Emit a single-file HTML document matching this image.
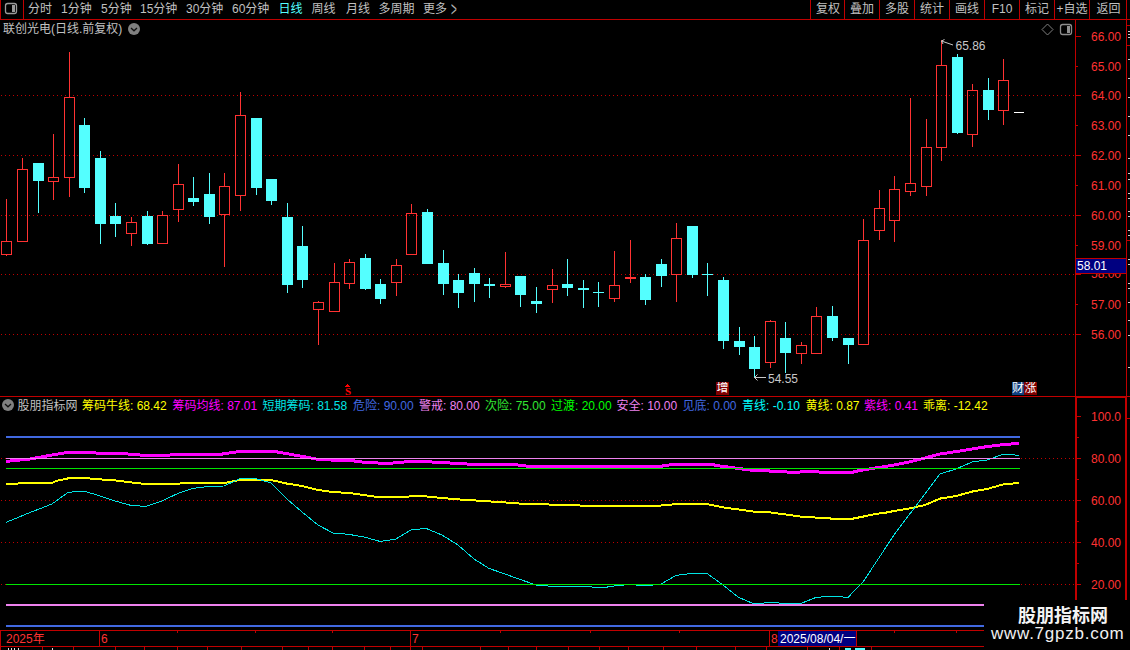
<!DOCTYPE html>
<html><head><meta charset="utf-8"><title>chart</title>
<style>
html,body{margin:0;padding:0;background:#000;}
body{width:1130px;height:650px;overflow:hidden;position:relative;font-family:"Liberation Sans","Noto Sans CJK SC","WenQuanYi Zen Hei",sans-serif;font-size:12px;line-height:14px;color:#c0c0c0;}
svg{position:absolute;left:0;top:0;}
.t{position:absolute;white-space:nowrap;}
.tb{top:2px;}
.ax{left:1091px;color:#ff3232;}
.bt{position:absolute;top:2px;width:34px;text-align:center;}
.lg{position:absolute;top:398px;white-space:nowrap;}
</style></head><body>
<svg width="1130" height="650" viewBox="0 0 1130 650" shape-rendering="crispEdges">
<g stroke="#c00000" stroke-width="1" stroke-dasharray="1 3">
<line x1="1" y1="95.5" x2="1075" y2="95.5"/>
<line x1="1" y1="155.5" x2="1075" y2="155.5"/>
<line x1="1" y1="215.5" x2="1075" y2="215.5"/>
<line x1="1" y1="274.5" x2="1075" y2="274.5"/>
<line x1="1" y1="334.5" x2="1075" y2="334.5"/>
<line x1="1" y1="458.5" x2="1075" y2="458.5"/>
<line x1="1" y1="500.5" x2="1075" y2="500.5"/>
<line x1="1" y1="542.5" x2="1075" y2="542.5"/>
<line x1="1" y1="584.5" x2="1075" y2="584.5"/>
</g>
<rect x="6" y="199" width="1" height="42" fill="#ff3232"/>
<rect x="6" y="255" width="1" height="1" fill="#ff3232"/>
<rect x="1" y="241" width="11" height="1" fill="#ff3232"/>
<rect x="1" y="254" width="11" height="1" fill="#ff3232"/>
<rect x="1" y="241" width="1" height="14" fill="#ff3232"/>
<rect x="11" y="241" width="1" height="14" fill="#ff3232"/>
<rect x="22" y="158" width="1" height="11" fill="#ff3232"/>
<rect x="17" y="169" width="11" height="1" fill="#ff3232"/>
<rect x="17" y="241" width="11" height="1" fill="#ff3232"/>
<rect x="17" y="169" width="1" height="73" fill="#ff3232"/>
<rect x="27" y="169" width="1" height="73" fill="#ff3232"/>
<rect x="38" y="181" width="1" height="32" fill="#54ffff"/>
<rect x="33" y="163" width="11" height="18" fill="#54ffff"/>
<rect x="53" y="134" width="1" height="43" fill="#ff3232"/>
<rect x="53" y="182" width="1" height="18" fill="#ff3232"/>
<rect x="48" y="177" width="11" height="1" fill="#ff3232"/>
<rect x="48" y="181" width="11" height="1" fill="#ff3232"/>
<rect x="48" y="177" width="1" height="5" fill="#ff3232"/>
<rect x="58" y="177" width="1" height="5" fill="#ff3232"/>
<rect x="69" y="52" width="1" height="45" fill="#ff3232"/>
<rect x="69" y="178" width="1" height="19" fill="#ff3232"/>
<rect x="64" y="97" width="11" height="1" fill="#ff3232"/>
<rect x="64" y="177" width="11" height="1" fill="#ff3232"/>
<rect x="64" y="97" width="1" height="81" fill="#ff3232"/>
<rect x="74" y="97" width="1" height="81" fill="#ff3232"/>
<rect x="84" y="118" width="1" height="7" fill="#54ffff"/>
<rect x="84" y="188" width="1" height="5" fill="#54ffff"/>
<rect x="79" y="125" width="11" height="63" fill="#54ffff"/>
<rect x="100" y="151" width="1" height="7" fill="#54ffff"/>
<rect x="100" y="224" width="1" height="20" fill="#54ffff"/>
<rect x="95" y="158" width="11" height="66" fill="#54ffff"/>
<rect x="115" y="203" width="1" height="13" fill="#54ffff"/>
<rect x="115" y="224" width="1" height="13" fill="#54ffff"/>
<rect x="110" y="216" width="11" height="8" fill="#54ffff"/>
<rect x="131" y="217" width="1" height="5" fill="#ff3232"/>
<rect x="131" y="234" width="1" height="12" fill="#ff3232"/>
<rect x="126" y="222" width="11" height="1" fill="#ff3232"/>
<rect x="126" y="233" width="11" height="1" fill="#ff3232"/>
<rect x="126" y="222" width="1" height="12" fill="#ff3232"/>
<rect x="136" y="222" width="1" height="12" fill="#ff3232"/>
<rect x="147" y="211" width="1" height="5" fill="#54ffff"/>
<rect x="147" y="244" width="1" height="1" fill="#54ffff"/>
<rect x="142" y="216" width="11" height="28" fill="#54ffff"/>
<rect x="162" y="211" width="1" height="4" fill="#ff3232"/>
<rect x="157" y="215" width="11" height="1" fill="#ff3232"/>
<rect x="157" y="243" width="11" height="1" fill="#ff3232"/>
<rect x="157" y="215" width="1" height="29" fill="#ff3232"/>
<rect x="167" y="215" width="1" height="29" fill="#ff3232"/>
<rect x="178" y="164" width="1" height="20" fill="#ff3232"/>
<rect x="178" y="210" width="1" height="12" fill="#ff3232"/>
<rect x="173" y="184" width="11" height="1" fill="#ff3232"/>
<rect x="173" y="209" width="11" height="1" fill="#ff3232"/>
<rect x="173" y="184" width="1" height="26" fill="#ff3232"/>
<rect x="183" y="184" width="1" height="26" fill="#ff3232"/>
<rect x="193" y="177" width="1" height="21" fill="#54ffff"/>
<rect x="193" y="202" width="1" height="4" fill="#54ffff"/>
<rect x="188" y="198" width="11" height="4" fill="#54ffff"/>
<rect x="209" y="173" width="1" height="21" fill="#54ffff"/>
<rect x="209" y="217" width="1" height="7" fill="#54ffff"/>
<rect x="204" y="194" width="11" height="23" fill="#54ffff"/>
<rect x="224" y="173" width="1" height="13" fill="#ff3232"/>
<rect x="224" y="215" width="1" height="52" fill="#ff3232"/>
<rect x="219" y="186" width="11" height="1" fill="#ff3232"/>
<rect x="219" y="214" width="11" height="1" fill="#ff3232"/>
<rect x="219" y="186" width="1" height="29" fill="#ff3232"/>
<rect x="229" y="186" width="1" height="29" fill="#ff3232"/>
<rect x="240" y="92" width="1" height="23" fill="#ff3232"/>
<rect x="240" y="196" width="1" height="15" fill="#ff3232"/>
<rect x="235" y="115" width="11" height="1" fill="#ff3232"/>
<rect x="235" y="195" width="11" height="1" fill="#ff3232"/>
<rect x="235" y="115" width="1" height="81" fill="#ff3232"/>
<rect x="245" y="115" width="1" height="81" fill="#ff3232"/>
<rect x="256" y="188" width="1" height="7" fill="#54ffff"/>
<rect x="251" y="118" width="11" height="70" fill="#54ffff"/>
<rect x="271" y="201" width="1" height="4" fill="#54ffff"/>
<rect x="266" y="179" width="11" height="22" fill="#54ffff"/>
<rect x="287" y="203" width="1" height="14" fill="#54ffff"/>
<rect x="287" y="285" width="1" height="8" fill="#54ffff"/>
<rect x="282" y="217" width="11" height="68" fill="#54ffff"/>
<rect x="302" y="226" width="1" height="20" fill="#54ffff"/>
<rect x="302" y="280" width="1" height="8" fill="#54ffff"/>
<rect x="297" y="246" width="11" height="34" fill="#54ffff"/>
<rect x="318" y="301" width="1" height="1" fill="#ff3232"/>
<rect x="318" y="310" width="1" height="35" fill="#ff3232"/>
<rect x="313" y="302" width="11" height="1" fill="#ff3232"/>
<rect x="313" y="309" width="11" height="1" fill="#ff3232"/>
<rect x="313" y="302" width="1" height="8" fill="#ff3232"/>
<rect x="323" y="302" width="1" height="8" fill="#ff3232"/>
<rect x="334" y="263" width="1" height="19" fill="#ff3232"/>
<rect x="329" y="282" width="11" height="1" fill="#ff3232"/>
<rect x="329" y="311" width="11" height="1" fill="#ff3232"/>
<rect x="329" y="282" width="1" height="30" fill="#ff3232"/>
<rect x="339" y="282" width="1" height="30" fill="#ff3232"/>
<rect x="349" y="259" width="1" height="3" fill="#ff3232"/>
<rect x="349" y="284" width="1" height="5" fill="#ff3232"/>
<rect x="344" y="262" width="11" height="1" fill="#ff3232"/>
<rect x="344" y="283" width="11" height="1" fill="#ff3232"/>
<rect x="344" y="262" width="1" height="22" fill="#ff3232"/>
<rect x="354" y="262" width="1" height="22" fill="#ff3232"/>
<rect x="365" y="254" width="1" height="4" fill="#54ffff"/>
<rect x="365" y="289" width="1" height="1" fill="#54ffff"/>
<rect x="360" y="258" width="11" height="31" fill="#54ffff"/>
<rect x="380" y="279" width="1" height="5" fill="#54ffff"/>
<rect x="380" y="299" width="1" height="5" fill="#54ffff"/>
<rect x="375" y="284" width="11" height="15" fill="#54ffff"/>
<rect x="396" y="259" width="1" height="6" fill="#ff3232"/>
<rect x="396" y="283" width="1" height="13" fill="#ff3232"/>
<rect x="391" y="265" width="11" height="1" fill="#ff3232"/>
<rect x="391" y="282" width="11" height="1" fill="#ff3232"/>
<rect x="391" y="265" width="1" height="18" fill="#ff3232"/>
<rect x="401" y="265" width="1" height="18" fill="#ff3232"/>
<rect x="411" y="204" width="1" height="9" fill="#ff3232"/>
<rect x="406" y="213" width="11" height="1" fill="#ff3232"/>
<rect x="406" y="254" width="11" height="1" fill="#ff3232"/>
<rect x="406" y="213" width="1" height="42" fill="#ff3232"/>
<rect x="416" y="213" width="1" height="42" fill="#ff3232"/>
<rect x="427" y="209" width="1" height="3" fill="#54ffff"/>
<rect x="422" y="212" width="11" height="52" fill="#54ffff"/>
<rect x="443" y="250" width="1" height="13" fill="#54ffff"/>
<rect x="443" y="284" width="1" height="11" fill="#54ffff"/>
<rect x="438" y="263" width="11" height="21" fill="#54ffff"/>
<rect x="458" y="274" width="1" height="6" fill="#54ffff"/>
<rect x="458" y="293" width="1" height="15" fill="#54ffff"/>
<rect x="453" y="280" width="11" height="13" fill="#54ffff"/>
<rect x="474" y="268" width="1" height="5" fill="#54ffff"/>
<rect x="474" y="284" width="1" height="18" fill="#54ffff"/>
<rect x="469" y="273" width="11" height="11" fill="#54ffff"/>
<rect x="489" y="278" width="1" height="6" fill="#54ffff"/>
<rect x="489" y="286" width="1" height="12" fill="#54ffff"/>
<rect x="484" y="284" width="11" height="2" fill="#54ffff"/>
<rect x="505" y="252" width="1" height="32" fill="#ff3232"/>
<rect x="505" y="287" width="1" height="1" fill="#ff3232"/>
<rect x="500" y="284" width="11" height="1" fill="#ff3232"/>
<rect x="500" y="286" width="11" height="1" fill="#ff3232"/>
<rect x="500" y="284" width="1" height="3" fill="#ff3232"/>
<rect x="510" y="284" width="1" height="3" fill="#ff3232"/>
<rect x="520" y="295" width="1" height="12" fill="#54ffff"/>
<rect x="515" y="276" width="11" height="19" fill="#54ffff"/>
<rect x="536" y="287" width="1" height="14" fill="#54ffff"/>
<rect x="536" y="304" width="1" height="9" fill="#54ffff"/>
<rect x="531" y="301" width="11" height="3" fill="#54ffff"/>
<rect x="552" y="269" width="1" height="16" fill="#ff3232"/>
<rect x="552" y="290" width="1" height="13" fill="#ff3232"/>
<rect x="547" y="285" width="11" height="1" fill="#ff3232"/>
<rect x="547" y="289" width="11" height="1" fill="#ff3232"/>
<rect x="547" y="285" width="1" height="5" fill="#ff3232"/>
<rect x="557" y="285" width="1" height="5" fill="#ff3232"/>
<rect x="567" y="259" width="1" height="25" fill="#54ffff"/>
<rect x="567" y="288" width="1" height="8" fill="#54ffff"/>
<rect x="562" y="284" width="11" height="4" fill="#54ffff"/>
<rect x="583" y="280" width="1" height="8" fill="#54ffff"/>
<rect x="583" y="290" width="1" height="18" fill="#54ffff"/>
<rect x="578" y="288" width="11" height="2" fill="#54ffff"/>
<rect x="598" y="282" width="1" height="10" fill="#54ffff"/>
<rect x="598" y="293" width="1" height="14" fill="#54ffff"/>
<rect x="593" y="292" width="11" height="1" fill="#54ffff"/>
<rect x="614" y="251" width="1" height="34" fill="#ff3232"/>
<rect x="614" y="299" width="1" height="3" fill="#ff3232"/>
<rect x="609" y="285" width="11" height="1" fill="#ff3232"/>
<rect x="609" y="298" width="11" height="1" fill="#ff3232"/>
<rect x="609" y="285" width="1" height="14" fill="#ff3232"/>
<rect x="619" y="285" width="1" height="14" fill="#ff3232"/>
<rect x="630" y="240" width="1" height="37" fill="#ff3232"/>
<rect x="630" y="279" width="1" height="4" fill="#ff3232"/>
<rect x="625" y="277" width="11" height="1" fill="#ff3232"/>
<rect x="625" y="278" width="11" height="1" fill="#ff3232"/>
<rect x="625" y="277" width="1" height="2" fill="#ff3232"/>
<rect x="635" y="277" width="1" height="2" fill="#ff3232"/>
<rect x="645" y="274" width="1" height="3" fill="#54ffff"/>
<rect x="645" y="300" width="1" height="5" fill="#54ffff"/>
<rect x="640" y="277" width="11" height="23" fill="#54ffff"/>
<rect x="661" y="259" width="1" height="5" fill="#54ffff"/>
<rect x="661" y="276" width="1" height="11" fill="#54ffff"/>
<rect x="656" y="264" width="11" height="12" fill="#54ffff"/>
<rect x="676" y="223" width="1" height="15" fill="#ff3232"/>
<rect x="676" y="275" width="1" height="27" fill="#ff3232"/>
<rect x="671" y="238" width="11" height="1" fill="#ff3232"/>
<rect x="671" y="274" width="11" height="1" fill="#ff3232"/>
<rect x="671" y="238" width="1" height="37" fill="#ff3232"/>
<rect x="681" y="238" width="1" height="37" fill="#ff3232"/>
<rect x="692" y="275" width="1" height="3" fill="#54ffff"/>
<rect x="687" y="226" width="11" height="49" fill="#54ffff"/>
<rect x="707" y="263" width="1" height="11" fill="#54ffff"/>
<rect x="707" y="275" width="1" height="21" fill="#54ffff"/>
<rect x="702" y="274" width="11" height="1" fill="#54ffff"/>
<rect x="723" y="277" width="1" height="3" fill="#54ffff"/>
<rect x="723" y="341" width="1" height="8" fill="#54ffff"/>
<rect x="718" y="280" width="11" height="61" fill="#54ffff"/>
<rect x="739" y="327" width="1" height="14" fill="#54ffff"/>
<rect x="739" y="347" width="1" height="8" fill="#54ffff"/>
<rect x="734" y="341" width="11" height="6" fill="#54ffff"/>
<rect x="754" y="336" width="1" height="11" fill="#54ffff"/>
<rect x="754" y="369" width="1" height="9" fill="#54ffff"/>
<rect x="749" y="347" width="11" height="22" fill="#54ffff"/>
<rect x="770" y="320" width="1" height="1" fill="#ff3232"/>
<rect x="770" y="363" width="1" height="5" fill="#ff3232"/>
<rect x="765" y="321" width="11" height="1" fill="#ff3232"/>
<rect x="765" y="362" width="11" height="1" fill="#ff3232"/>
<rect x="765" y="321" width="1" height="42" fill="#ff3232"/>
<rect x="775" y="321" width="1" height="42" fill="#ff3232"/>
<rect x="785" y="322" width="1" height="16" fill="#54ffff"/>
<rect x="785" y="353" width="1" height="20" fill="#54ffff"/>
<rect x="780" y="338" width="11" height="15" fill="#54ffff"/>
<rect x="801" y="342" width="1" height="3" fill="#ff3232"/>
<rect x="801" y="354" width="1" height="10" fill="#ff3232"/>
<rect x="796" y="345" width="11" height="1" fill="#ff3232"/>
<rect x="796" y="353" width="11" height="1" fill="#ff3232"/>
<rect x="796" y="345" width="1" height="9" fill="#ff3232"/>
<rect x="806" y="345" width="1" height="9" fill="#ff3232"/>
<rect x="816" y="307" width="1" height="9" fill="#ff3232"/>
<rect x="811" y="316" width="11" height="1" fill="#ff3232"/>
<rect x="811" y="353" width="11" height="1" fill="#ff3232"/>
<rect x="811" y="316" width="1" height="38" fill="#ff3232"/>
<rect x="821" y="316" width="1" height="38" fill="#ff3232"/>
<rect x="832" y="306" width="1" height="10" fill="#54ffff"/>
<rect x="832" y="338" width="1" height="3" fill="#54ffff"/>
<rect x="827" y="316" width="11" height="22" fill="#54ffff"/>
<rect x="848" y="345" width="1" height="19" fill="#54ffff"/>
<rect x="843" y="338" width="11" height="7" fill="#54ffff"/>
<rect x="863" y="219" width="1" height="21" fill="#ff3232"/>
<rect x="858" y="240" width="11" height="1" fill="#ff3232"/>
<rect x="858" y="344" width="11" height="1" fill="#ff3232"/>
<rect x="858" y="240" width="1" height="105" fill="#ff3232"/>
<rect x="868" y="240" width="1" height="105" fill="#ff3232"/>
<rect x="879" y="190" width="1" height="18" fill="#ff3232"/>
<rect x="879" y="231" width="1" height="9" fill="#ff3232"/>
<rect x="874" y="208" width="11" height="1" fill="#ff3232"/>
<rect x="874" y="230" width="11" height="1" fill="#ff3232"/>
<rect x="874" y="208" width="1" height="23" fill="#ff3232"/>
<rect x="884" y="208" width="1" height="23" fill="#ff3232"/>
<rect x="894" y="176" width="1" height="13" fill="#ff3232"/>
<rect x="894" y="221" width="1" height="21" fill="#ff3232"/>
<rect x="889" y="189" width="11" height="1" fill="#ff3232"/>
<rect x="889" y="220" width="11" height="1" fill="#ff3232"/>
<rect x="889" y="189" width="1" height="32" fill="#ff3232"/>
<rect x="899" y="189" width="1" height="32" fill="#ff3232"/>
<rect x="910" y="98" width="1" height="85" fill="#ff3232"/>
<rect x="910" y="192" width="1" height="4" fill="#ff3232"/>
<rect x="905" y="183" width="11" height="1" fill="#ff3232"/>
<rect x="905" y="191" width="11" height="1" fill="#ff3232"/>
<rect x="905" y="183" width="1" height="9" fill="#ff3232"/>
<rect x="915" y="183" width="1" height="9" fill="#ff3232"/>
<rect x="926" y="119" width="1" height="28" fill="#ff3232"/>
<rect x="926" y="187" width="1" height="9" fill="#ff3232"/>
<rect x="921" y="147" width="11" height="1" fill="#ff3232"/>
<rect x="921" y="186" width="11" height="1" fill="#ff3232"/>
<rect x="921" y="147" width="1" height="40" fill="#ff3232"/>
<rect x="931" y="147" width="1" height="40" fill="#ff3232"/>
<rect x="941" y="40" width="1" height="25" fill="#ff3232"/>
<rect x="941" y="148" width="1" height="13" fill="#ff3232"/>
<rect x="936" y="65" width="11" height="1" fill="#ff3232"/>
<rect x="936" y="147" width="11" height="1" fill="#ff3232"/>
<rect x="936" y="65" width="1" height="83" fill="#ff3232"/>
<rect x="946" y="65" width="1" height="83" fill="#ff3232"/>
<rect x="957" y="54" width="1" height="3" fill="#54ffff"/>
<rect x="957" y="133" width="1" height="1" fill="#54ffff"/>
<rect x="952" y="57" width="11" height="76" fill="#54ffff"/>
<rect x="972" y="84" width="1" height="6" fill="#ff3232"/>
<rect x="972" y="135" width="1" height="12" fill="#ff3232"/>
<rect x="967" y="90" width="11" height="1" fill="#ff3232"/>
<rect x="967" y="134" width="11" height="1" fill="#ff3232"/>
<rect x="967" y="90" width="1" height="45" fill="#ff3232"/>
<rect x="977" y="90" width="1" height="45" fill="#ff3232"/>
<rect x="988" y="78" width="1" height="12" fill="#54ffff"/>
<rect x="988" y="110" width="1" height="10" fill="#54ffff"/>
<rect x="983" y="90" width="11" height="20" fill="#54ffff"/>
<rect x="1003" y="59" width="1" height="21" fill="#ff3232"/>
<rect x="1003" y="111" width="1" height="14" fill="#ff3232"/>
<rect x="998" y="80" width="11" height="1" fill="#ff3232"/>
<rect x="998" y="110" width="11" height="1" fill="#ff3232"/>
<rect x="998" y="80" width="1" height="31" fill="#ff3232"/>
<rect x="1008" y="80" width="1" height="31" fill="#ff3232"/>
<rect x="1014" y="112" width="10" height="1" fill="#ffffff"/>
<polyline points="6,484 14,484 22,483 52,483 56,481 68,478.4 84,478 100,479.4 115,480.4 131,482.4 146,484 178,484 182,483 224,483 240,480 271,480 287,483.6 302,486 318,490 333,492 349,493 364,495 380,497.4 395,497.4 411,496.4 426,496.4 442,498 458,499.4 474,500.4 489,501.4 505,502.4 520,503.6 552,504.6 583,505.6 660,505.6 677,504 707,504 723,507.4 738,509.4 754,511.6 770,512.4 785,514.4 801,516.6 816,517.6 832,518.6 853,518.6 863,516.6 875,514 886,512.6 894,511 909,508.6 925,505 940,498.6 956,496 972,491.6 987,489 1003,484.4 1019,483" fill="none" stroke="#ffff00" stroke-width="2" stroke-linejoin="round"/>
<polyline points="6,461.4 30,459 52,455 68,452.4 92,452.4 100,453.6 123,453.6 140,455 170,455 178,454.4 220,454.4 240,451.4 274,451.4 300,456 316,459 331,460 347,460 362,462 378,463 393,463 409,461.6 425,461.6 440,462.5 458,463.4 473,464.4 515,464.4 520,465.4 530,466.4 660,466.4 673,464.4 711,464.4 720,466 735,468 750,470 777,471.4 793,472.4 810,471.4 825,472.4 852,472.4 860,470.4 875,468 886,466.4 894,465 909,462 925,458 940,454 956,451.6 972,449 987,446.6 1003,444.6 1019,443.4" fill="none" stroke="#ff00ff" stroke-width="3" stroke-linejoin="round"/>
<polyline points="6,522.4 30,512.5 52,504 68,492.4 84,491 100,496 115,501 131,505.4 146,506.4 162,501 178,493.4 193,488.4 209,486.4 224,486 240,478.6 256,478.6 271,483 287,499 302,512 318,525 333,533 349,534.4 364,537 380,541.4 395,539.4 411,530 426,528.4 442,535 458,545 474,559 489,568.4 505,574 520,579.4 536,585 552,586.4 583,586.4 598,587.4 605,587.4 614,586 630,584.4 645,586 661,584 676,575.4 692,573.4 707,573.4 723,585 738,597 754,604 770,602.4 785,603.4 801,603.4 816,597.4 832,596.2 848,597.4 863,582 894,535 909,515 925,494 940,474 956,469 972,462 987,460 1003,454.4 1011,454.4 1019,455.6" fill="none" stroke="#00e5e5" stroke-width="1" stroke-linejoin="round"/>
<rect x="6" y="436" width="1014" height="2" fill="#4169e1"/>
<rect x="6" y="458" width="1014" height="1" fill="#ee82ee"/>
<rect x="6" y="468" width="1014" height="1" fill="#00e600"/>
<rect x="6" y="584" width="1014" height="1" fill="#00e600"/>
<rect x="6" y="604" width="978" height="2" fill="#ee82ee"/>
<rect x="6" y="625" width="978" height="2" fill="#4169e1"/>
<rect x="0" y="19" width="1130" height="1" fill="#c00000"/>
<rect x="0" y="0" width="1" height="20" fill="#c00000"/>
<rect x="23" y="0" width="1" height="19" fill="#c00000"/>
<rect x="810" y="0" width="1" height="19" fill="#c00000"/>
<rect x="844" y="0" width="1" height="19" fill="#c00000"/>
<rect x="879" y="0" width="1" height="19" fill="#c00000"/>
<rect x="914" y="0" width="1" height="19" fill="#c00000"/>
<rect x="949" y="0" width="1" height="19" fill="#c00000"/>
<rect x="984" y="0" width="1" height="19" fill="#c00000"/>
<rect x="1019" y="0" width="1" height="19" fill="#c00000"/>
<rect x="1054" y="0" width="1" height="19" fill="#c00000"/>
<rect x="1089" y="0" width="1" height="19" fill="#c00000"/>
<rect x="1126" y="0" width="1" height="396" fill="#c00000"/>
<rect x="1125" y="396" width="2" height="204" fill="#c00000"/>
<rect x="1127" y="25" width="3" height="1" fill="#c00000"/>
<rect x="1127" y="45" width="3" height="1" fill="#c00000"/>
<rect x="1075" y="19" width="1" height="377" fill="#c00000"/>
<rect x="1075" y="396" width="2" height="204" fill="#c00000"/>
<rect x="0" y="396" width="1130" height="1" fill="#c00000"/>
<rect x="1075" y="397" width="52" height="1" fill="#c00000"/>
<rect x="0" y="630" width="984" height="1" fill="#c00000"/>
<rect x="0" y="646" width="984" height="1" fill="#c00000"/>
<rect x="0" y="630" width="1" height="20" fill="#c00000"/>
<rect x="1076" y="334" width="5" height="1" fill="#c00000"/>
<rect x="1076" y="304" width="2" height="1" fill="#c00000"/>
<rect x="1076" y="274" width="5" height="1" fill="#c00000"/>
<rect x="1076" y="245" width="2" height="1" fill="#c00000"/>
<rect x="1076" y="215" width="5" height="1" fill="#c00000"/>
<rect x="1076" y="185" width="2" height="1" fill="#c00000"/>
<rect x="1076" y="155" width="5" height="1" fill="#c00000"/>
<rect x="1076" y="125" width="2" height="1" fill="#c00000"/>
<rect x="1076" y="95" width="5" height="1" fill="#c00000"/>
<rect x="1076" y="66" width="2" height="1" fill="#c00000"/>
<rect x="1076" y="36" width="5" height="1" fill="#c00000"/>
<rect x="1077" y="416" width="4" height="1" fill="#c00000"/>
<rect x="1077" y="437" width="2" height="1" fill="#c00000"/>
<rect x="1077" y="458" width="4" height="1" fill="#c00000"/>
<rect x="1077" y="479" width="2" height="1" fill="#c00000"/>
<rect x="1077" y="500" width="4" height="1" fill="#c00000"/>
<rect x="1077" y="521" width="2" height="1" fill="#c00000"/>
<rect x="1077" y="542" width="4" height="1" fill="#c00000"/>
<rect x="1077" y="563" width="2" height="1" fill="#c00000"/>
<rect x="1077" y="584" width="4" height="1" fill="#c00000"/>
<rect x="177" y="631" width="1" height="2" fill="#c00000"/>
<rect x="255" y="631" width="1" height="2" fill="#c00000"/>
<rect x="332" y="631" width="1" height="2" fill="#c00000"/>
<rect x="500" y="631" width="1" height="2" fill="#c00000"/>
<rect x="590" y="631" width="1" height="2" fill="#c00000"/>
<rect x="679" y="631" width="1" height="2" fill="#c00000"/>
<rect x="894" y="631" width="1" height="2" fill="#c00000"/>
<rect x="956" y="631" width="1" height="2" fill="#c00000"/>
<rect x="99" y="630" width="1" height="16" fill="#c00000"/>
<rect x="410" y="630" width="1" height="16" fill="#c00000"/>
<rect x="769" y="630" width="1" height="16" fill="#c00000"/>
<rect x="856" y="630" width="1" height="16" fill="#c00000"/>
<rect x="42" y="647" width="1" height="3" fill="#c00000"/>
<rect x="73" y="647" width="1" height="3" fill="#c00000"/>
<rect x="115" y="647" width="1" height="3" fill="#c00000"/>
<rect x="144" y="647" width="1" height="3" fill="#c00000"/>
<rect x="177" y="647" width="1" height="3" fill="#c00000"/>
<rect x="207" y="647" width="1" height="3" fill="#c00000"/>
<rect x="241" y="647" width="1" height="3" fill="#c00000"/>
<rect x="282" y="647" width="1" height="3" fill="#c00000"/>
<rect x="308" y="647" width="1" height="3" fill="#c00000"/>
<rect x="332" y="647" width="1" height="3" fill="#c00000"/>
<rect x="364" y="647" width="1" height="3" fill="#c00000"/>
<rect x="390" y="647" width="1" height="3" fill="#c00000"/>
<rect x="410" y="647" width="1" height="3" fill="#c00000"/>
<rect x="422" y="647" width="1" height="3" fill="#c00000"/>
<rect x="480" y="647" width="1" height="3" fill="#c00000"/>
<rect x="508" y="647" width="1" height="3" fill="#c00000"/>
<rect x="536" y="647" width="1" height="3" fill="#c00000"/>
<rect x="568" y="647" width="1" height="3" fill="#c00000"/>
<rect x="599" y="647" width="1" height="3" fill="#c00000"/>
<rect x="628" y="647" width="1" height="3" fill="#c00000"/>
<rect x="663" y="647" width="1" height="3" fill="#c00000"/>
<rect x="696" y="647" width="1" height="3" fill="#c00000"/>
<rect x="735" y="647" width="1" height="3" fill="#c00000"/>
<rect x="766" y="647" width="1" height="3" fill="#c00000"/>
<rect x="807" y="647" width="1" height="3" fill="#c00000"/>
<rect x="839" y="647" width="1" height="3" fill="#c00000"/>
<rect x="871" y="647" width="1" height="3" fill="#c00000"/>
<rect x="5.5" y="3.5" width="11" height="10" rx="2.2" fill="none" stroke="#9a9a9a" stroke-width="1.3" shape-rendering="auto"/>
<rect x="12" y="5" width="3" height="7" fill="#9a9a9a"/>
<g shape-rendering="auto"><circle cx="134" cy="29" r="6" fill="#808080"/><path d="M131 28 L134 30.8 L137 28" fill="none" stroke="#101010" stroke-width="1.3"/></g>
<g shape-rendering="auto"><circle cx="8" cy="405" r="6" fill="#808080"/><path d="M5 404 L8 406.8 L11 404" fill="none" stroke="#101010" stroke-width="1.3"/></g>
<path d="M1042 29.5 L1047.5 24 L1053 29.5 L1047.5 35 Z" fill="none" stroke="#808080" shape-rendering="auto"/>
<rect x="1060.5" y="24.5" width="11" height="10" rx="2.2" fill="none" stroke="#8c8c8c" stroke-width="1.3" shape-rendering="auto"/>
<rect x="1067" y="26" width="3" height="7" fill="#909090"/>
<path d="M941.5 41 L953 45 M941.5 41 l3 -1.5 M941.5 41 l1.5 3" stroke="#c8c8c8" fill="none" shape-rendering="auto"/>
<path d="M754.5 377.5 H766 M754.5 377.5 l3 -3 M754.5 377.5 l3 3" stroke="#c8c8c8" fill="none" shape-rendering="auto"/>
<rect x="347" y="384" width="1" height="1" fill="#ff0000"/><rect x="346" y="385" width="3" height="1" fill="#ff0000"/><rect x="345" y="386" width="5" height="1" fill="#ff0000"/>
<rect x="1128" y="31" width="2" height="1" fill="#d0d0d0"/>
<rect x="1128" y="34" width="2" height="1" fill="#d0d0d0"/>
<rect x="1128" y="37" width="2" height="1" fill="#d0d0d0"/>
<rect x="1128" y="59" width="2" height="1" fill="#d0d0d0"/>
<rect x="1128" y="78" width="2" height="1" fill="#d0d0d0"/>
<rect x="1128" y="97" width="2" height="1" fill="#d0d0d0"/>
<rect x="1128" y="116" width="2" height="1" fill="#d0d0d0"/>
<rect x="1128" y="135" width="2" height="1" fill="#d0d0d0"/>
<rect x="1128" y="158" width="2" height="1" fill="#d0d0d0"/>
<rect x="1128" y="173" width="2" height="1" fill="#d0d0d0"/>
<rect x="1128" y="179" width="2" height="1" fill="#d0d0d0"/>
<rect x="1128" y="193" width="2" height="1" fill="#d0d0d0"/>
<rect x="1128" y="198" width="2" height="1" fill="#d0d0d0"/>
<rect x="1128" y="211" width="2" height="1" fill="#d0d0d0"/>
<rect x="1128" y="216" width="2" height="1" fill="#d0d0d0"/>
<rect x="1128" y="230" width="2" height="1" fill="#d0d0d0"/>
<rect x="1128" y="235" width="2" height="1" fill="#d0d0d0"/>
<rect x="1128" y="259" width="2" height="1" fill="#d0d0d0"/>
<rect x="1128" y="264" width="2" height="1" fill="#d0d0d0"/>
<rect x="1128" y="283" width="2" height="1" fill="#d0d0d0"/>
<rect x="1128" y="288" width="2" height="1" fill="#d0d0d0"/>
<rect x="1128" y="302" width="2" height="1" fill="#d0d0d0"/>
<rect x="1128" y="320" width="2" height="1" fill="#d0d0d0"/>
<rect x="1128" y="335" width="2" height="1" fill="#d0d0d0"/>
<rect x="1128" y="367" width="2" height="1" fill="#d0d0d0"/>
<rect x="1127" y="240" width="3" height="1" fill="#c00000"/>
<rect x="1127" y="418" width="3" height="1" fill="#c00000"/>
<rect x="829" y="648" width="1" height="2" fill="#e0e0e0"/>
<rect x="845" y="648" width="6" height="2" fill="#54ffff"/><rect x="855" y="648" width="10" height="2" fill="#54ffff"/>
<rect x="8" y="648" width="1" height="2" fill="#e0e0e0"/><rect x="11" y="648" width="1" height="2" fill="#e0e0e0"/><rect x="14" y="648" width="1" height="2" fill="#e0e0e0"/><rect x="18" y="648" width="1" height="2" fill="#e0e0e0"/><rect x="52" y="648" width="1" height="2" fill="#e0e0e0"/>
</svg>
<div class="t " style="left:28px;top:2px;">分时</div>
<div class="t " style="left:61px;top:2px;">1分钟</div>
<div class="t " style="left:101px;top:2px;">5分钟</div>
<div class="t " style="left:140px;top:2px;">15分钟</div>
<div class="t " style="left:186px;top:2px;">30分钟</div>
<div class="t " style="left:232px;top:2px;">60分钟</div>
<div class="t " style="left:311.5px;top:2px;">周线</div>
<div class="t " style="left:346px;top:2px;">月线</div>
<div class="t " style="left:378.5px;top:2px;">多周期</div>
<div class="t " style="left:423px;top:2px;">更多</div>
<div class="t " style="left:278.5px;top:2px;color:#54ffff">日线</div>
<div class="t " style="left:450.5px;top:-1px;font-size:15px;line-height:20px;transform:scale(0.66,1.35);transform-origin:0 50%;color:#b0b0b0">&gt;</div>
<div class="bt" style="left:811px;width:34px">复权</div>
<div class="bt" style="left:845px;width:34px">叠加</div>
<div class="bt" style="left:880px;width:34px">多股</div>
<div class="bt" style="left:915px;width:34px">统计</div>
<div class="bt" style="left:950px;width:34px">画线</div>
<div class="bt" style="left:985px;width:34px">F10</div>
<div class="bt" style="left:1020px;width:34px">标记</div>
<div class="bt" style="left:1055px;width:34px">+自选</div>
<div class="bt" style="left:1090px;width:37px">返回</div>
<div class="t " style="left:3px;top:22px;">联创光电(日线.前复权)</div>
<div class="t " style="left:1091px;top:328px;color:#ff3232">56.00</div>
<div class="t " style="left:1091px;top:298px;color:#ff3232">57.00</div>
<div class="t " style="left:1091px;top:239px;color:#ff3232">59.00</div>
<div class="t " style="left:1091px;top:209px;color:#ff3232">60.00</div>
<div class="t " style="left:1091px;top:179px;color:#ff3232">61.00</div>
<div class="t " style="left:1091px;top:149px;color:#ff3232">62.00</div>
<div class="t " style="left:1091px;top:119px;color:#ff3232">63.00</div>
<div class="t " style="left:1091px;top:89px;color:#ff3232">64.00</div>
<div class="t " style="left:1091px;top:60px;color:#ff3232">65.00</div>
<div class="t " style="left:1091px;top:30px;color:#ff3232">66.00</div>
<div class="t " style="left:1091px;top:267px;color:#ff3232">58.00</div>
<div style="position:absolute;left:1076px;top:258px;width:50px;height:16px;background:#000080;border-top:1px solid #c00000;border-bottom:1px solid #c00000;box-sizing:border-box;"></div>
<div class="t " style="left:1077px;top:259px;color:#fff">58.01</div>
<div class="t " style="left:1091px;top:410px;color:#ff3232">100.0</div>
<div class="t " style="left:1091px;top:452px;color:#ff3232">80.00</div>
<div class="t " style="left:1091px;top:494px;color:#ff3232">60.00</div>
<div class="t " style="left:1091px;top:536px;color:#ff3232">40.00</div>
<div class="t " style="left:1091px;top:578px;color:#ff3232">20.00</div>
<div class="t " style="left:955.5px;top:39px;color:#c8c8c8">65.86</div>
<div class="t " style="left:768px;top:372px;color:#c8c8c8">54.55</div>
<div class="t " style="left:17.5px;top:399px;color:#c0c0c0">股朋指标网</div>
<div class="t " style="left:82px;top:399px;color:#ffff00">筹码牛线: 68.42</div>
<div class="t " style="left:172.5px;top:399px;color:#ff00ff">筹码均线: 87.01</div>
<div class="t " style="left:262.5px;top:399px;color:#00e5e5">短期筹码: 81.58</div>
<div class="t " style="left:353px;top:399px;color:#4169e1">危险: 90.00</div>
<div class="t " style="left:419px;top:399px;color:#ee82ee">警戒: 80.00</div>
<div class="t " style="left:485px;top:399px;color:#32e632">次险: 75.00</div>
<div class="t " style="left:551px;top:399px;color:#00ff00">过渡: 20.00</div>
<div class="t " style="left:616.5px;top:399px;color:#ee82ee">安全: 10.00</div>
<div class="t " style="left:682.5px;top:399px;color:#4169e1">见底: 0.00</div>
<div class="t " style="left:742px;top:399px;color:#00ffff">青线: -0.10</div>
<div class="t " style="left:805.5px;top:399px;color:#ffff00">黄线: 0.87</div>
<div class="t " style="left:864px;top:399px;color:#ff00ff">紫线: 0.41</div>
<div class="t " style="left:923px;top:399px;color:#ffff00">乖离: -12.42</div>
<div class="t " style="left:6px;top:632px;color:#ff3232">2025年</div>
<div class="t " style="left:101px;top:632px;color:#ff3232">6</div>
<div class="t " style="left:412px;top:632px;color:#ff3232">7</div>
<div class="t " style="left:771px;top:632px;color:#ff3232">8</div>
<div style="position:absolute;left:778px;top:631px;width:78px;height:15px;background:#000080;"></div>
<div class="t " style="left:780px;top:632px;color:#fff">2025/08/04/一</div>
<div style="position:absolute;left:716px;top:382px;width:13px;height:13px;background:#800000;color:#fff;font-size:12px;line-height:13px;text-align:center;overflow:hidden">增</div>
<div style="position:absolute;left:1012px;top:382px;width:12px;height:13px;background:#104080;color:#fff;font-size:12px;line-height:13px;text-align:center;overflow:hidden">财</div>
<div style="position:absolute;left:1024px;top:382px;width:13px;height:13px;background:#800000;color:#fff;font-size:12px;line-height:13px;text-align:center;overflow:hidden">涨</div>
<div class="t " style="left:345px;top:384px;color:#ff0000;font-weight:bold;font-size:11px;font-family:'Liberation Serif',serif">S</div>
<div style="position:absolute;left:984px;top:600px;width:146px;height:50px;background:#000;"></div>
<div class="t " style="left:1018px;top:604px;color:#f4f4f4;font-weight:bold;font-size:18px;line-height:24px;font-family:'Liberation Sans','Noto Sans CJK SC',sans-serif">股朋指标网</div>
<div class="t " style="left:991px;top:622px;color:#f0f0f0;font-size:17px;line-height:24px;letter-spacing:0.75px">www.7gpzb.com</div>
</body></html>
